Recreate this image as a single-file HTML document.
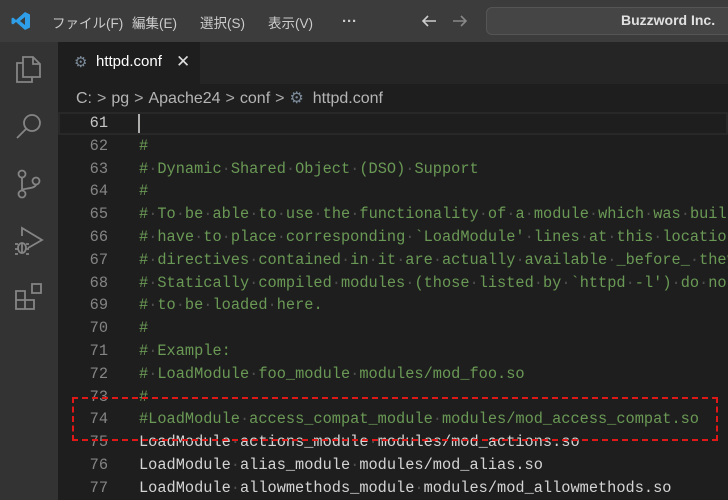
<!DOCTYPE html>
<html><head><meta charset="utf-8"><style>
*{margin:0;padding:0;box-sizing:border-box}
body{width:728px;height:500px;overflow:hidden;background:#1e1e1e;font-family:"Liberation Sans","Noto Sans CJK JP",sans-serif;position:relative}
.title{position:absolute;left:0;top:0;width:728px;height:42px;background:#3c3c3c}
.menu{position:absolute;top:12px;color:#ccc;font-size:13.5px}
.act{position:absolute;left:0;top:42px;width:58px;height:458px;background:#333}
.tabs{position:absolute;left:58px;top:42px;width:670px;height:42px;background:#252526}
.tab{position:absolute;left:0;top:0;width:142px;height:42px;background:#1e1e1e;color:#fff;font-size:15px}
.bc{position:absolute;left:76px;top:88px;color:#b5b5b5;font-size:16px;white-space:nowrap}
.bc i{font-style:normal;color:#aaa;margin:0 5px}
.code{position:absolute;left:58px;top:112px;width:670px;height:388px;overflow:hidden;font-family:"Liberation Mono",monospace;font-size:15.3px}
.ln{height:22.8px;line-height:22.8px;position:relative;white-space:pre}
.n{position:absolute;right:620px;text-align:right}
.t{position:absolute;left:81px;color:#d4d4d4}
.c{color:#6a9955}
.d{color:#4e4e4e}
.cur{outline:2px solid #282828;outline-offset:-2px}
</style></head><body>
<div class="title">
<svg style="position:absolute;left:11px;top:11px" width="20" height="20" viewBox="0 0 20 20"><path d="M14 1 L19 3.5 V16.5 L14 19 L5 11 L2 13.5 L0.5 12.5 V7.5 L2 6.5 L5 9 Z M14 6 L9 10 L14 14 Z" fill="#2f9ee8" fill-rule="evenodd"/></svg>
<span class="menu" style="left:52px">ファイル(F)</span>
<span class="menu" style="left:132px">編集(E)</span>
<span class="menu" style="left:200px">選択(S)</span>
<span class="menu" style="left:268px">表示(V)</span>
<span class="menu" style="left:342px;top:13px;font-size:15px;font-weight:bold">···</span>
<svg style="position:absolute;left:420px;top:12px" width="18" height="18" viewBox="0 0 18 18"><path d="M16 9H3M8 4L3 9L8 14" stroke="#ccc" stroke-width="1.6" fill="none"/></svg>
<svg style="position:absolute;left:451px;top:12px" width="18" height="18" viewBox="0 0 18 18"><path d="M2 9H15M10 4L15 9L10 14" stroke="#888" stroke-width="1.6" fill="none"/></svg>
<div style="position:absolute;left:486px;top:7px;width:250px;height:28px;border:1px solid #555;border-radius:6px;background:#454545"></div>
<span style="position:absolute;left:621px;top:12px;color:#e0e0e0;font-size:14px;font-weight:bold">Buzzword Inc.</span>
</div>
<div class="act">
<svg style="position:absolute;left:14px;top:12px" width="30" height="30" viewBox="0 0 30 30" fill="none" stroke="#858585" stroke-width="1.8"><path d="M9 9H3V28H18V23"/><path d="M9 3H19L26 10V23H9Z"/><path d="M19 3V10H26"/></svg>
<svg style="position:absolute;left:14px;top:70px" width="30" height="30" viewBox="0 0 30 30" fill="none" stroke="#858585" stroke-width="1.8"><circle cx="18" cy="11" r="8"/><path d="M12 17L3 26"/></svg>
<svg style="position:absolute;left:14px;top:126px" width="30" height="32" viewBox="0 0 30 32" fill="none" stroke="#858585" stroke-width="1.8"><circle cx="8" cy="6" r="3.5"/><circle cx="8" cy="26" r="3.5"/><circle cx="22" cy="13" r="3.5"/><path d="M8 9.5V22.5M22 16.5C22 21 8 20 8 22.5"/></svg>
<svg style="position:absolute;left:12px;top:184px" width="34" height="32" viewBox="0 0 34 32" fill="none" stroke="#858585" stroke-width="1.8"><path d="M10 10V2L30 14L16 22"/><ellipse cx="10" cy="22" rx="4" ry="5"/><path d="M3 18H6M3 23H6M3 28H6M14 18H17M14 23H17M14 28H17M10 17V27"/></svg>
<svg style="position:absolute;left:14px;top:240px" width="30" height="30" viewBox="0 0 30 30" fill="none" stroke="#858585" stroke-width="1.8"><path d="M2 9H11V27H2ZM2 18H20V27H11M18 2H27V11H18Z"/></svg>
</div>
<div class="tabs"><div class="tab">
<span style="position:absolute;left:16px;top:11px;color:#7b8a99;font-size:15px">⚙</span>
<span style="position:absolute;left:38px;top:11px">httpd.conf</span>
<span style="position:absolute;left:118px;top:10px;font-size:17px;color:#ddd">✕</span>
</div></div>
<div class="bc">C:<i>&gt;</i>pg<i>&gt;</i>Apache24<i>&gt;</i>conf<i>&gt;</i><span style="color:#7b8a99">⚙</span>&nbsp;&nbsp;httpd.conf</div>
<div class="code" id="code"></div>
<div style="position:absolute;left:138px;top:114px;width:2px;height:19px;background:#aeafad"></div>
<div style="position:absolute;left:72px;top:397px;width:646px;height:44px;border:2px dashed #e01818"></div>
<script>
var L=[["61",""],["62","#"],["63","# Dynamic Shared Object (DSO) Support"],["64","#"],["65","# To be able to use the functionality of a module which was built as a shared object"],["66","# have to place corresponding `LoadModule' lines at this location so the"],["67","# directives contained in it are actually available _before_ they are used."],["68","# Statically compiled modules (those listed by `httpd -l') do not need"],["69","# to be loaded here."],["70","#"],["71","# Example:"],["72","# LoadModule foo_module modules/mod_foo.so"],["73","#"],["74","#LoadModule access_compat_module modules/mod_access_compat.so"],["75","LoadModule actions_module modules/mod_actions.so"],["76","LoadModule alias_module modules/mod_alias.so"],["77","LoadModule allowmethods_module modules/mod_allowmethods.so"]];
var h="";L.forEach(function(x,i){var t=x[1].replace(/&/g,"&amp;").replace(/</g,"&lt;").split(" ").join('<span class="d">·</span>');var cm=x[1].charAt(0)=="#";h+='<div class="ln'+(i==0?' cur':'')+'"><span class="n" style="color:'+(i==0?'#c6c6c6':'#858585')+'">'+x[0]+'</span><span class="t'+(cm?' c':'')+'">'+t+'</span></div>';});
document.getElementById("code").innerHTML=h;
</script>
</body></html>
